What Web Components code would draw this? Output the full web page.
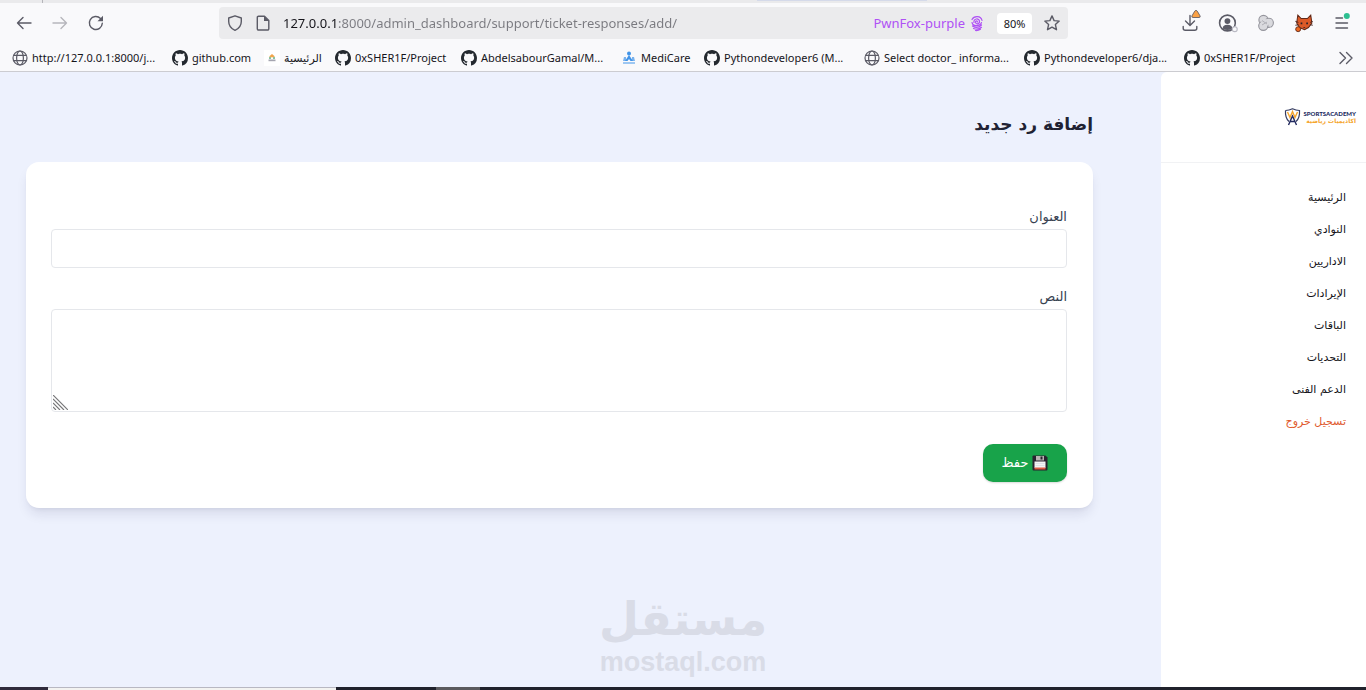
<!DOCTYPE html>
<html lang="ar">
<head>
<meta charset="utf-8">
<title>إضافة رد جديد</title>
<style>
html,body{margin:0;height:100%}
body{font-family:"Noto Sans","Open Sans","DejaVu Sans",sans-serif;background:#edf1fd}
</style>
</head>
<body>
<browser-window>
  <nav-toolbar slot="chrome"></nav-toolbar>
  <bookmarks-bar slot="chrome"></bookmarks-bar>
  <side-menu slot="side">
    <menu-link>الرئيسية</menu-link>
    <menu-link>النوادي</menu-link>
    <menu-link>الاداريين</menu-link>
    <menu-link>الإيرادات</menu-link>
    <menu-link>الباقات</menu-link>
    <menu-link>التحديات</menu-link>
    <menu-link>الدعم الفنى</menu-link>
    <menu-link danger>تسجيل خروج</menu-link>
  </side-menu>
  <response-form slot="main"><span slot="title">إضافة رد جديد</span></response-form>
</browser-window>

<script>
const define = (name, html, setup, observed = []) => customElements.define(name, class extends HTMLElement {
  static observedAttributes = observed;
  constructor() {
    super();
    const t = document.createElement('template');
    t.innerHTML = html;
    this.attachShadow({mode: 'open'}).append(t.content.cloneNode(true));
  }
  connectedCallback() { if (setup) setup(this, this.shadowRoot); }
  attributeChangedCallback() { if (setup) setup(this, this.shadowRoot); }
});

define('ui-icon', `<style>
:host{display:block;flex:none;width:16px;height:16px}
:host([large]){width:18px;height:18px}
svg{display:block;width:100%;height:100%;overflow:visible}
</style><span></span>`, (el, root) => {
  const line = 'fill="none" stroke="#5b5b66" stroke-width="1.4" stroke-linecap="round" stroke-linejoin="round"';
  const icons = {
    back: `<g ${line}><path d="M15 8H1.5M7 2.5 1.5 8 7 13.5"/></g>`,
    forward: `<g ${line} opacity=".42"><path d="M1 8h13.5M9 2.5 14.5 8 9 13.5"/></g>`,
    reload: `<g ${line}><path d="M14.3 8.3A6.5 6.5 0 1 1 12.5 3.5"/></g><path fill="#5b5b66" d="M15 .8v5.5H9.5z"/>`,
    shield: `<path ${line} d="M8 .8 14.3 3v3.5c0 4-2.3 7-6.3 8.9C4 13.5 1.7 10.5 1.7 6.5V3z"/>`,
    page: `<path ${line} d="M3.5 1.2h6L13.8 5.5v8.3a1.2 1.2 0 0 1-1.2 1.2H3.5a1.2 1.2 0 0 1-1.2-1.2V2.4a1.2 1.2 0 0 1 1.2-1.2z"/><path fill="#5b5b66" d="M9 1v5h5z"/>`,
    star: `<path ${line} d="m8 .9 2.1 4.7 5.1.5-3.8 3.5 1.1 5.1L8 12.1l-4.5 2.6 1.1-5.1L.8 6.1l5.1-.5z"/>`,
    globe: `<g fill="none" stroke="#5b5b66" stroke-width="1.2"><circle cx="8" cy="8" r="7"/><ellipse cx="8" cy="8" rx="3.4" ry="7"/><path d="M1.8 5.3h12.4M1.8 10.7h12.4"/></g>`,
    github: `<path fill="#24292f" fill-rule="evenodd" d="M8 0C3.58 0 0 3.58 0 8c0 3.54 2.29 6.53 5.47 7.59.4.07.55-.17.55-.38 0-.19-.01-.82-.01-1.49-2.01.37-2.53-.49-2.69-.94-.09-.23-.48-.94-.82-1.13-.28-.15-.68-.52-.01-.53.63-.01 1.08.58 1.23.82.72 1.21 1.87.87 2.33.66.07-.52.28-.87.51-1.07-1.78-.2-3.64-.89-3.64-3.95 0-.87.31-1.59.82-2.15-.08-.2-.36-1.02.08-2.12 0 0 .67-.21 2.2.82.64-.18 1.32-.27 2-.27s1.36.09 2 .27c1.53-1.04 2.2-.82 2.2-.82.44 1.1.16 1.92.08 2.12.51.56.82 1.27.82 2.15 0 3.07-1.87 3.75-3.65 3.95.29.25.54.73.54 1.48 0 1.07-.01 1.93-.01 2.2 0 .21.15.46.55.38A8.01 8.01 0 0 0 16 8c0-4.42-3.58-8-8-8z"/>`,
    site: `<path fill="#fff" d="M0 0h16v16H0z"/><path fill="#f0a54c" d="m8 4 3 2.5-3 1-3-1z"/><path fill="#8bc2a0" d="M5 7h2v2H5zm4 0h2v2H9z"/><path fill="#a5a5b0" d="M4.5 9.5h7v1.7h-7z"/>`,
    medicare: `<g fill="#4194e8"><circle cx="8" cy="3.5" r="2"/><path d="m8 5 4 6H9.5L8 9l-1.500 2H4z"/><path d="M3 7h2v4H2zM11 7h2l1 4h-3z" opacity=".7"/><path d="M2 12.5h12v1H2z"/></g>`,
    print: `<g fill="none" stroke="#af51f5" stroke-width="1.2" stroke-linecap="round"><path d="M3 4.500C5 .5 12 .5 13 5.500M5 7.500c-1-4 5.500-5 5.500-1 0 3-4 3-4 .5 0-1.500 2-1.500 2 0M3 7.500c1 4.500 8 4 9.500 0M3.500 11c3 2 6.500 1.500 9-1M4.500 13.500c3 1.200 6 .6 8-1.200M6.500 15.500c2 .2 3.500-.3 5-1.300"/></g>`,
    download: `<g ${line}><path d="M8 .5V10M3.500 6 8 10.500 12.500 6M1.200 11.500v1.800a2 2 0 0 0 2 2h9.600a2 2 0 0 0 2-2v-1.800"/></g><path fill="#f9a146" stroke="#52525e" stroke-width=".8" d="m10 .8 2.700-4.600q1.300-1.800 2.600 0L18 .8q.8 1.700-1 1.700h-6q-1.800 0-1-1.700z"/>`,
    account: `<g ${line}><circle cx="7.500" cy="8" r="7"/></g><circle cx="7.500" cy="6.300" r="2.600" fill="#5b5b66"/><path fill="#5b5b66" d="M3.300 12.800q0-3.300 4.200-3.300t4.200 3.300q-4.200 3-8.400 0z"/><circle cx="14" cy="13.500" r="2.200" fill="#f9f9fb" stroke="#b9b9c3"/>`,
    cloud: `<g fill="#dadade" stroke="#94949c" stroke-width="1.100"><circle cx="5.500" cy="5" r="4.600"/><circle cx="10.800" cy="7.800" r="4.600"/><circle cx="5.300" cy="10.800" r="4.600"/></g><circle cx="6.800" cy="7.800" r="3.800" fill="#dadade"/><path d="M4 5.500 9 9M4 10l5-3" stroke="#b2b2b8"/>`,
    fox: `<path d="M2.500 1 5.500 4h5.500L14 1l1 7-3 4-3.500 2L4 12 1.500 8z" fill="#dc5a27" stroke="#612918" stroke-width=".9"/><path d="M.3 6.500 3 7.500M.3 10 3 9.500M15.800 6.500 13.500 7.500M15.800 10 13.500 9.500" stroke="#42211d" stroke-width=".8"/><path d="M5 7.500h1.500V9H5zm5 0h1.500V9H10z" fill="#25202a"/><path d="m7 11.500 1.200 1 1.200-1z" fill="#25202a"/><circle cx="2.800" cy="13.500" r="2.200" fill="#ef6a21" stroke="#612918" stroke-width=".8"/>`,
    menu: `<g ${line}><path d="M2 3h6.500M2 8h11.500M2 13h11.500"/></g><circle cx="12.800" cy="1" r="3" fill="#2ebf91"/>`,
    more: `<path ${line} d="m2 2.500 5.500 5.500L2 13.500M8.500 2.500 14 8l-5.500 5.500"/>`,
    floppy: `<path d="M.5 1.500q0-1 1-1h12l2 2v12q0 1-1 1h-13q-1 0-1-1z" fill="#29232f"/><path d="M4 1h8v4.500H4z" fill="#b8b4b2"/><path d="M8.500 1.500h2v3h-2z" fill="#29232f"/><path d="M2.500 6.500h11V13h-11z" fill="#f4f4f4"/><path d="M3.500 8.500h9M3.500 10.500h9" stroke="#dfe3e9"/><path d="M2.500 12.500h11v2h-11z" fill="#dc5b42"/>`
  };
  const markup = icons[el.getAttribute('name')];
  if (markup) root.querySelector('span').innerHTML = `<svg viewBox="0 0 16 16" aria-hidden="true">${markup}</svg>`;
}, ['name']);

define('nav-toolbar', `<style>
:host{display:block;background:#f9f9fb}
.tabs{display:flex;height:3px;background:#eaeaec}
.tabs i{width:42px;border-right:1px solid #b5b5ba}
.tabs b{width:170px;margin-left:714px;height:1px;background:#d5daea}
.row{display:flex;align-items:center;height:40px;padding:0 16px}
button{display:block;border:0;background:none;padding:0;font:inherit}
.nav{display:flex;align-items:center;gap:20px;width:203px}
.address{display:flex;align-items:center;width:849px;height:32px;box-sizing:border-box;padding:0 8px;gap:12px;background:#ebebed;border-radius:4px}
input{flex:1;min-width:0;border:0;padding:0;outline:0;height:24px;font:13px "Noto Sans",sans-serif;color:#7a7a80;
 background:linear-gradient(90deg,#15141a 56px,#7a7a80 56px);-webkit-background-clip:text;background-clip:text;-webkit-text-fill-color:transparent}
.who{display:flex;align-items:center;gap:4px;color:#af51f5;font-size:13px}
.zoom{background:#fff;border-radius:4px;width:35px;height:21px;font-size:11px;color:#15141a}
.tools{display:flex;align-items:center;gap:21px;margin-left:auto}
</style>
<div class="tabs"><i></i><b></b></div>
<div class="row">
 <div class="nav">
  <button aria-label="Back"><ui-icon name="back"></ui-icon></button>
  <button aria-label="Forward"><ui-icon name="forward"></ui-icon></button>
  <button aria-label="Reload"><ui-icon name="reload"></ui-icon></button>
 </div>
 <div class="address">
  <ui-icon name="shield"></ui-icon><ui-icon name="page"></ui-icon>
  <input aria-label="Address" dir="ltr" value="127.0.0.1:8000/admin_dashboard/support/ticket-responses/add/">
  <span class="who">PwnFox-purple <ui-icon name="print"></ui-icon></span>
  <button class="zoom">80%</button>
  <button aria-label="Bookmark"><ui-icon name="star"></ui-icon></button>
 </div>
 <div class="tools">
  <button aria-label="Downloads"><ui-icon name="download"></ui-icon></button>
  <button aria-label="Account"><ui-icon large name="account"></ui-icon></button>
  <button aria-label="Containers"><ui-icon name="cloud"></ui-icon></button>
  <button aria-label="PwnFox"><ui-icon large name="fox"></ui-icon></button>
  <button aria-label="Menu"><ui-icon name="menu"></ui-icon></button>
 </div>
</div>`);

define('bookmark-link', `<style>
:host{display:block;flex:none;width:160px}
:host([size=s]){width:71px}:host([size=m]){width:83px}:host([size=l]){width:92px}:host([size=xl]){width:126px}
a{display:flex;align-items:center;gap:4px;color:#15141a;text-decoration:none;font-size:11px;line-height:16px;white-space:nowrap}
</style><a href="#"><ui-icon></ui-icon><span><slot></slot></span></a>`, (el, root) =>
  root.querySelector('ui-icon').setAttribute('name', el.getAttribute('icon')));

define('bookmarks-bar', `<style>
:host{display:flex;align-items:center;height:26px;padding:2px 12px 0;background:#f9f9fb;border-bottom:1px solid #ccccd1}
button{margin-left:auto;border:0;background:none;padding:0}
</style>
<bookmark-link icon="globe">http://127.0.0.1:8000/j...</bookmark-link>
<bookmark-link icon="github" size="l">github.com</bookmark-link>
<bookmark-link icon="site" size="s">الرئيسية</bookmark-link>
<bookmark-link icon="github" size="xl">0xSHER1F/Project</bookmark-link>
<bookmark-link icon="github">AbdelsabourGamal/M...</bookmark-link>
<bookmark-link icon="medicare" size="m">MediCare</bookmark-link>
<bookmark-link icon="github">Pythondeveloper6 (M...</bookmark-link>
<bookmark-link icon="globe">Select doctor_ informa...</bookmark-link>
<bookmark-link icon="github">Pythondeveloper6/dja...</bookmark-link>
<bookmark-link icon="github" size="xl">0xSHER1F/Project</bookmark-link>
<button aria-label="More bookmarks"><ui-icon name="more"></ui-icon></button>`);

define('academy-logo', `<style>
:host{display:flex;align-items:center;gap:3px}
svg{width:17px;height:18px;flex:none}
div{display:flex;flex-direction:column;color:#222a60;font:900 6px/7px Lato,sans-serif;white-space:nowrap}
span{color:#f5a52c;font:bold 6px/7px "DejaVu Sans",sans-serif}
</style>
<svg viewBox="0 0 17 18" aria-hidden="true"><path d="M1.500 2.500Q5 2.500 8.500.8 12 2.500 15.500 2.500 16 10 12 13.500M1.500 2.500Q1 10 5 13.500" fill="none" stroke="#343b60" stroke-width="1.200"/><path d="m3.500 4 2.500 5.500 2.500-6 2.500 6L13.500 4" fill="none" stroke="#f5a52c" stroke-width="1.400"/><path d="m4.500 17 4-9 4 9M6 13.500h5" fill="none" stroke="#222a60" stroke-width="1.400"/></svg>
<div dir="ltr">SPORTSACADEMY<span dir="rtl">اكاديميات رياضية</span></div>`);

define('menu-link', `<style>
:host{display:block}
a{display:block;color:#15141a;text-decoration:none;font:11px/16px "DejaVu Sans",sans-serif}
:host([danger]) a{color:#e0592c}
</style><a href="#"><slot></slot></a>`);

define('side-menu', `<style>
:host{display:block;width:205px;flex:none;background:#fff;border-top-left-radius:6px}
header{display:flex;height:90px;align-items:center;padding:0 10px;border-bottom:1px solid #f1f2f4;direction:ltr;justify-content:flex-end}
nav{display:flex;flex-direction:column;gap:16px;padding:27px 20px}
</style>
<header><academy-logo></academy-logo></header>
<nav><slot></slot></nav>`);

define('response-form', `<style>
:host{display:block;flex:1;min-width:0;padding:36px 68px 32px 26px}
h1{margin:0 0 22px;font:bold 17px/32px "DejaVu Sans",sans-serif;color:#212233}
form{display:block;background:#fff;border-radius:13px;padding:45px 26px 26px 25px;box-shadow:0 8px 12px -2px rgba(25,30,75,.1),0 3px 5px -3px rgba(25,30,75,.1)}
label{display:block;font:13px/20px "DejaVu Sans",sans-serif;color:#374151;margin-bottom:2px}
input,textarea{display:block;width:100%;box-sizing:border-box;border:1px solid #e5e7eb;border-radius:4px;padding:8px;background:#fff;font:13px/20px "DejaVu Sans",sans-serif;outline:0}
input{height:39px;margin-bottom:19px}
.area{position:relative;margin-bottom:32px}
textarea{height:103px;resize:none}
.area svg{position:absolute;left:2px;bottom:2px;width:15px;height:15px}
button{display:flex;align-items:center;justify-content:center;gap:4px;width:84px;height:38px;border:0;border-radius:10px;background:#18a34a;color:#fff;font:13px/20px "DejaVu Sans",sans-serif;box-shadow:0 1px 2px rgba(0,0,0,.15)}
</style>
<h1><slot name="title"></slot></h1>
<form>
 <label for="subject">العنوان</label><input id="subject" type="text">
 <label for="body">النص</label>
 <div class="area"><textarea id="body"></textarea>
 <svg viewBox="0 0 15 15" aria-hidden="true"><path d="m0 0 15 15M0 4l11 11M0 8l7 7M0 12l3 3" stroke="#777779" stroke-width="1.200"/></svg></div>
 <button type="button"><ui-icon name="floppy"></ui-icon>حفظ</button>
</form>`);

define('water-mark', `<style>
:host{display:flex;flex-direction:column;align-items:center;color:#d9dce7;pointer-events:none}
b{font:bold 46px/56px "DejaVu Sans",sans-serif}
span{font:bold 27px/30px "Liberation Sans",sans-serif}
</style><b dir="rtl">مستقل</b><span dir="ltr">mostaql.com</span>`);

define('browser-window', `<style>
:host{display:flex;flex-direction:column;min-height:100vh}
.page{position:relative;display:flex;flex:1;direction:rtl}
water-mark{position:absolute;left:0;right:0;bottom:10px}
footer{display:flex;height:3px;background:#20222c}
.lead{width:48px;background:#302b3c}
.search{width:288px;background:#f3f3f1;border-top:1px solid #b8b8c2;box-sizing:border-box}
.task{width:44px;margin-left:100px;background:#5b5a5e}
</style>
<slot name="chrome"></slot>
<div class="page"><slot name="side"></slot><slot name="main"></slot><water-mark></water-mark></div>
<footer><div class="lead"></div><div class="search"></div><div class="task"></div></footer>`);
</script>
</body>
</html>
